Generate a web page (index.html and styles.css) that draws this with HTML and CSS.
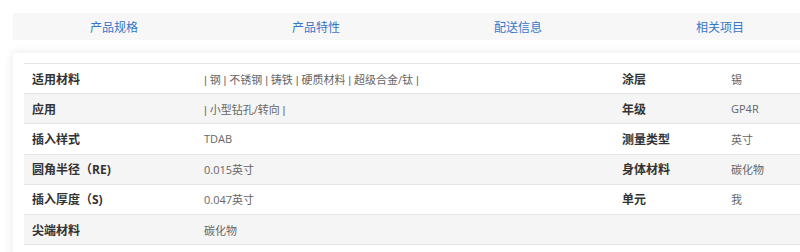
FILE: index.html
```html
<!DOCTYPE html>
<html lang="zh">
<head>
<meta charset="utf-8">
<link rel="stylesheet" href="styles.css">
</head>
<body>
<div class="page">
  <nav class="tabs">
    <a class="tab">产品规格</a>
    <a class="tab">产品特性</a>
    <a class="tab">配送信息</a>
    <a class="tab">相关项目</a>
  </nav>
  <section class="card">
    <table class="specs">
      <colgroup>
        <col class="c1"><col class="c2"><col class="c3"><col class="c4">
      </colgroup>
      <tbody>
        <tr><th>适用材料</th><td><span class="sep">|</span> 钢 <span class="sep">|</span> 不锈钢 <span class="sep">|</span> 铸铁 <span class="sep">|</span> 硬质材料 <span class="sep">|</span> 超级合金/钛 <span class="sep">|</span></td><th>涂层</th><td>锡</td></tr>
        <tr><th>应用</th><td><span class="sep">|</span> 小型钻孔/转向 <span class="sep">|</span></td><th>年级</th><td>GP4R</td></tr>
        <tr><th>插入样式</th><td>TDAB</td><th>测量类型</th><td>英寸</td></tr>
        <tr><th>圆角半径（RE)</th><td>0.015英寸</td><th>身体材料</th><td>碳化物</td></tr>
        <tr><th>插入厚度（S)</th><td>0.047英寸</td><th>单元</th><td>我</td></tr>
        <tr><th>尖端材料</th><td>碳化物</td><th></th><td></td></tr>
      </tbody>
    </table>
  </section>
</div>
</body>
</html>
```

FILE: styles.css
```css
html, body {
  margin: 0;
  padding: 0;
  background: #fff;
  overflow: hidden;
}
body {
  font-family: "Open Sans", "Noto Sans CJK SC", sans-serif;
  color: #333;
}
.page {
  width: 808px;
  padding: 13px 0 0 13px;
}
.tabs {
  display: grid;
  grid-template-columns: repeat(4, 202px);
  height: 27px;
  background: #f7f7f7;
}
.tab {
  display: flex;
  align-items: center;
  justify-content: center;
  font-size: 12px;
  color: #3576c9;
  text-decoration: none;
}
.card {
  margin-top: 13px;
  background: #fff;
  box-shadow: 0 0 10px rgba(0, 0, 0, 0.09);
  padding: 10px 11px 20px 11px;
}
.specs {
  width: 786px;
  border-collapse: collapse;
  table-layout: fixed;
  border-top: 1px solid #e6e6e6;
}
.c1 { width: 172px; }
.c2 { width: 418px; }
.c3 { width: 109px; }
.c4 { width: 87px; }
.specs tr {
  height: 30.2px;
  border-bottom: 1px solid #e6e6e6;
}
.specs tr:nth-child(even) {
  background: #f5f5f5;
}
.specs th, .specs td {
  padding: 0 8px;
  text-align: left;
  vertical-align: middle;
  white-space: nowrap;
}
.specs th {
  font-size: 12px;
  font-weight: bold;
  color: #333;
}
.specs td {
  font-size: 11px;
  color: #666;
}
.sep {
  font-family: "Liberation Sans", sans-serif;
}
```
